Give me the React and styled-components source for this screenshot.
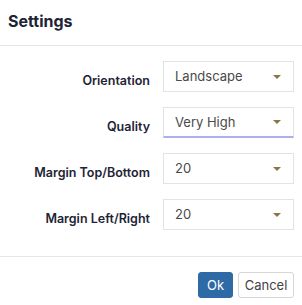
import styled, { createGlobalStyle } from "styled-components";

const GlobalStyle = createGlobalStyle`
  html, body {
    margin: 0;
    padding: 0;
    background: #ffffff;
    font-family: "Inter", "Liberation Sans", sans-serif;
  }
`;

const Dialog = styled.div`
  width: 302px;
  height: 305px;
  display: flex;
  flex-direction: column;
  background: #ffffff;
`;

const Header = styled.div`
  height: 46px;
  padding: 0 8px;
  display: flex;
  align-items: center;
  border-bottom: 1px solid #e6e6e6;
  box-sizing: border-box;
`;

const Title = styled.h1`
  margin: 0;
  margin-top: -4px;
  font-size: 16px;
  font-weight: 700;
  color: #1e2435;
`;

const Body = styled.div`
  flex: 1;
  padding: 15px 8px 0 8px;
  display: flex;
  flex-direction: column;
  gap: 15px;
`;

const Row = styled.div`
  display: flex;
  align-items: center;
  justify-content: flex-end;
  gap: 13px;
`;

const Label = styled.label`
  font-size: 12.5px;
  font-weight: 600;
  color: #1e2435;
  text-align: right;
  padding-top: 8px;
`;

const Select = styled.div`
  width: 131px;
  height: 31px;
  box-sizing: border-box;
  border: 1px solid #e3e3e3;
  border-bottom: ${(p) => (p.$focused ? "2px solid #a9b1f2" : "1px solid #e3e3e3")};
  display: flex;
  align-items: center;
  justify-content: space-between;
  padding: 0 12px 0 11px;
  font-size: 13px;
  color: #4a4a4a;
`;

const Value = styled.span`
  margin-top: -1px;
`;

const Arrow = styled.span`
  width: 0;
  height: 0;
  border-left: 4px solid transparent;
  border-right: 4px solid transparent;
  border-top: 4px solid #8c7646;
`;

const Footer = styled.div`
  height: 49px;
  box-sizing: border-box;
  border-top: 1px solid #e6e6e6;
  padding: 15px 8px 0 8px;
  display: flex;
  justify-content: flex-end;
  gap: 5px;
`;

const Button = styled.button`
  height: 26px;
  width: ${(p) => (p.$primary ? "35px" : "56px")};
  box-sizing: border-box;
  border-radius: 3px;
  font-family: inherit;
  font-size: 13px;
  padding: 0;
  background: ${(p) => (p.$primary ? "#2d6aa6" : "#ffffff")};
  color: ${(p) => (p.$primary ? "#ffffff" : "#444444")};
  border: 1px solid ${(p) => (p.$primary ? "#2d6aa6" : "#d6d6d6")};
`;

const fields = [
  { label: "Orientation", value: "Landscape" },
  { label: "Quality", value: "Very High", focused: true },
  { label: "Margin Top/Bottom", value: "20" },
  { label: "Margin Left/Right", value: "20" },
];

export default function App() {
  return (
    <>
      <GlobalStyle />
      <Dialog>
        <Header>
          <Title>Settings</Title>
        </Header>
        <Body>
          {fields.map((f) => (
            <Row key={f.label}>
              <Label>{f.label}</Label>
              <Select $focused={f.focused}>
                <Value>{f.value}</Value>
                <Arrow />
              </Select>
            </Row>
          ))}
        </Body>
        <Footer>
          <Button $primary>Ok</Button>
          <Button>Cancel</Button>
        </Footer>
      </Dialog>
    </>
  );
}
